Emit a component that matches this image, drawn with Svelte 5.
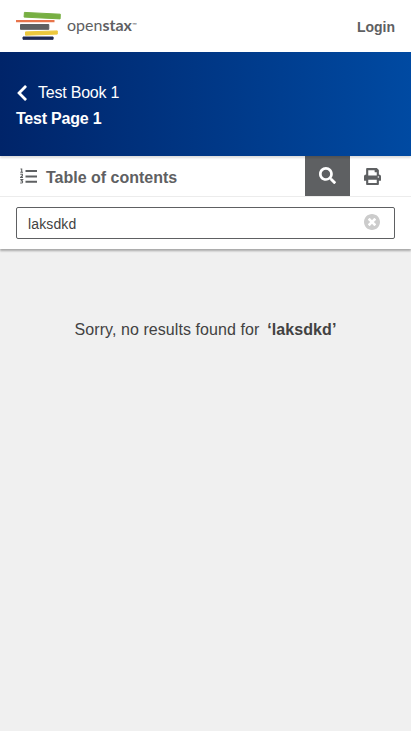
<script>
  const query = 'laksdkd';
  let value = $state(query);
</script>

<div class="page">
  <header class="nav">
    <a class="logo" href="#home" aria-label="openstax">
      <svg width="46" height="30" viewBox="0 0 46 30">
        <g stroke-width="1" stroke-linejoin="round">
          <path fill="#77af42" stroke="#77af42" d="M8.400 1.400 44.300 3.200 44.100 7.900 8.100 6.100Z" />
          <path fill="#5e6062" stroke="#5e6062" d="M4.500 13.500H32.800V18.300H4.500Z" />
          <path fill="#edc83d" stroke="#edc83d" d="M9.500 20.900 41.300 19.900V23.100L9.500 24.200Z" />
          <path fill="#202b55" stroke="#202b55" d="M7 26H37.100V28.300H7Z" />
        </g>
        <path fill="#e7744b" d="M0 9H38.500V11.300H0Z" />
      </svg>
      <span class="word">open<b>stax</b><i>™</i></span>
    </a>
    <a class="login" href="#login">Login</a>
  </header>

  <div class="banner">
    <a class="book" href="#book">
      <svg width="10" height="16" viewBox="24 32 270 448"><path fill="currentColor" d="M35 239 229 45c9-9 24-9 34 0l22 23c10 9 10 24 0 34L131 256l154 154c10 10 10 25 0 34l-22 23c-10 9-25 9-34 0L35 273c-10-9-10-25 0-34z" /></svg>
      <span>Test Book 1</span>
    </a>
    <h1>Test Page 1</h1>
  </div>

  <div class="toolbar">
    <button class="toc">
      <svg width="17" height="16" viewBox="0 0 17 16">
        <g fill="none" stroke="currentColor" stroke-width="1.100">
          <path d="M.5 1H1.700V4.200M.3 4.300H3M.3 6.200H2.400V7.500L.7 9.400H3M.3 11.600H2.600L1.500 12.900C3 12.900 3 15 1.400 15H.2" />
        </g>
        <path fill="currentColor" d="M5.500 2H17V4H5.500zM5.500 7.500H17V9.500H5.500zM5.500 12.700H17V14.700H5.500z" />
      </svg>
      <span>Table of contents</span>
    </button>
    <button class="tool active" aria-label="Search">
      <svg width="17" height="17" viewBox="0 0 512 512"><path fill="currentColor" d="M505 442.700 405.300 343c-4.500-4.500-10.600-7-17-7H372c27.600-35.300 44-79.700 44-128C416 93.100 322.900 0 208 0S0 93.100 0 208s93.100 208 208 208c48.300 0 92.700-16.400 128-44v16.300c0 6.400 2.500 12.500 7 17l99.700 99.700c9.400 9.400 24.600 9.400 33.900 0l28.300-28.300c9.400-9.400 9.400-24.600.1-34zM208 336c-70.700 0-128-57.200-128-128 0-70.700 57.200-128 128-128 70.700 0 128 57.200 128 128 0 70.700-57.200 128-128 128z" /></svg>
    </button>
    <button class="tool" aria-label="Print">
      <svg width="17" height="17" viewBox="0 0 512 512"><path fill="currentColor" d="M448 192V77.250c0-8.490-3.370-16.620-9.370-22.630L393.370 9.370c-6-6-14.140-9.370-22.630-9.370H96C78.330 0 64 14.330 64 32v160c-35.350 0-64 28.650-64 64v112c0 8.840 7.160 16 16 16h48v96c0 17.670 14.330 32 32 32h320c17.670 0 32-14.330 32-32v-96h48c8.840 0 16-7.160 16-16V256c0-35.350-28.650-64-64-64zm-64 256H128v-96h256v96zm0-224H128V64h192v48c0 8.840 7.160 16 16 16h48v96zm48 72c-13.250 0-24-10.750-24-24s10.750-24 24-24 24 10.750 24 24-10.750 24-24 24z" /></svg>
    </button>
  </div>

  <div class="search">
    <div class="field">
      <input aria-label="Search text" bind:value />
      <button class="clear" aria-label="Clear" onclick={() => (value = '')}>
        <svg width="16" height="16" viewBox="8 8 496 496"><path fill="currentColor" d="M256 8C119 8 8 119 8 256s111 248 248 248 248-111 248-248S393 8 256 8zm121.600 313.100c4.700 4.700 4.700 12.300 0 17L338 377.600c-4.700 4.700-12.300 4.700-17 0L256 312l-65.100 65.600c-4.700 4.700-12.300 4.700-17 0L134.400 338c-4.700-4.700-4.700-12.300 0-17l65.600-65-65.600-65.100c-4.700-4.700-4.700-12.300 0-17l39.600-39.600c4.700-4.700 12.300-4.700 17 0l65 65.700 65.100-65.600c4.700-4.700 12.300-4.700 17 0l39.600 39.600c4.700 4.700 4.700 12.300 0 17L312 256l65.600 65.100z" /></svg>
      </button>
    </div>
  </div>

  <main>
    <p><span class="msg">Sorry, no results found for</span><strong>‘{query}’</strong></p>
  </main>
</div>

<style>
  :global(body) { margin: 0; }
  .page {
    display: flex;
    flex-direction: column;
    height: 731px;
    overflow: hidden;
    background: #f0f0f0;
    color: #424242;
    font-family: "Liberation Sans", Arial, sans-serif;
    font-size: 16px;
  }
  a { color: inherit; text-decoration: none; }
  button { border: 0; padding: 0; margin: 0; background: none; color: inherit; font: inherit; }
  svg { display: block; flex: none; }
  .nav {
    display: flex;
    align-items: center;
    justify-content: space-between;
    flex: none;
    height: 52px;
    padding: 0 16px;
    box-sizing: border-box;
    background: #fff;
    color: #5e6062;
  }
  .logo { display: flex; align-items: center; }
  .word {
    margin: -2px 0 0 5px;
    font: 400 16px/20px Lato, sans-serif;
    letter-spacing: 0;
  }
  .word b { font-weight: 700; }
  .word i { font: 6px/6px Lato, sans-serif; vertical-align: 4px; }
  .login { font-size: 14px; font-weight: 700; line-height: 20px; padding-top: 2px; }
  .banner {
    flex: none;
    height: 104px;
    padding: 28px 16px 0;
    box-sizing: border-box;
    background: linear-gradient(to right, #002469, #004aa2);
    color: #fff;
    z-index: 2;
    box-shadow: 0 2px 2px rgba(0, 0, 0, 0.14);
  }
  .book { display: flex; align-items: center; height: 26px; padding-left: 1px; letter-spacing: -0.22px; }
  .book span { margin-left: 11px; }
  h1 { margin: 0; font-size: 16px; line-height: 26px; letter-spacing: -0.22px; }
  .toolbar {
    display: flex;
    flex: none;
    height: 41px;
    box-sizing: border-box;
    padding-right: 16px;
    border-bottom: 1px solid #ececec;
    background: #fff;
    color: #5e6062;
  }
  .toc { display: flex; align-items: center; flex: 1; padding-left: 20px; font-weight: 700; }
  .toc span { margin-left: 9px; padding-top: 3px; }
  .tool { display: flex; align-items: center; justify-content: center; width: 45px; }
  .active { background: #5e6062; color: #fff; }
  .active svg { margin-top: -2px; }
  .search {
    flex: none;
    height: 52px;
    box-sizing: border-box;
    padding: 10px 16px;
    background: #fff;
    box-shadow: 0 2px 2px rgba(0, 0, 0, 0.3);
  }
  .field {
    display: flex;
    align-items: center;
    height: 32px;
    box-sizing: border-box;
    border: 1px solid #5e6062;
    border-radius: 2px;
    padding: 0 14px 0 11px;
  }
  input {
    flex: 1;
    min-width: 0;
    padding: 2px 0 0;
    border: 0;
    outline: 0;
    background: none;
    color: #424242;
    font: 14px/20px "Liberation Sans", Arial, sans-serif;
    letter-spacing: 0.12px;
  }
  .clear { color: #ccc; padding-bottom: 2px; }
  main { padding-top: 68px; text-align: center; }
  p { margin: 0; line-height: 26px; white-space: nowrap; letter-spacing: 0.07px; }
  strong { margin-left: 8px; }
</style>
